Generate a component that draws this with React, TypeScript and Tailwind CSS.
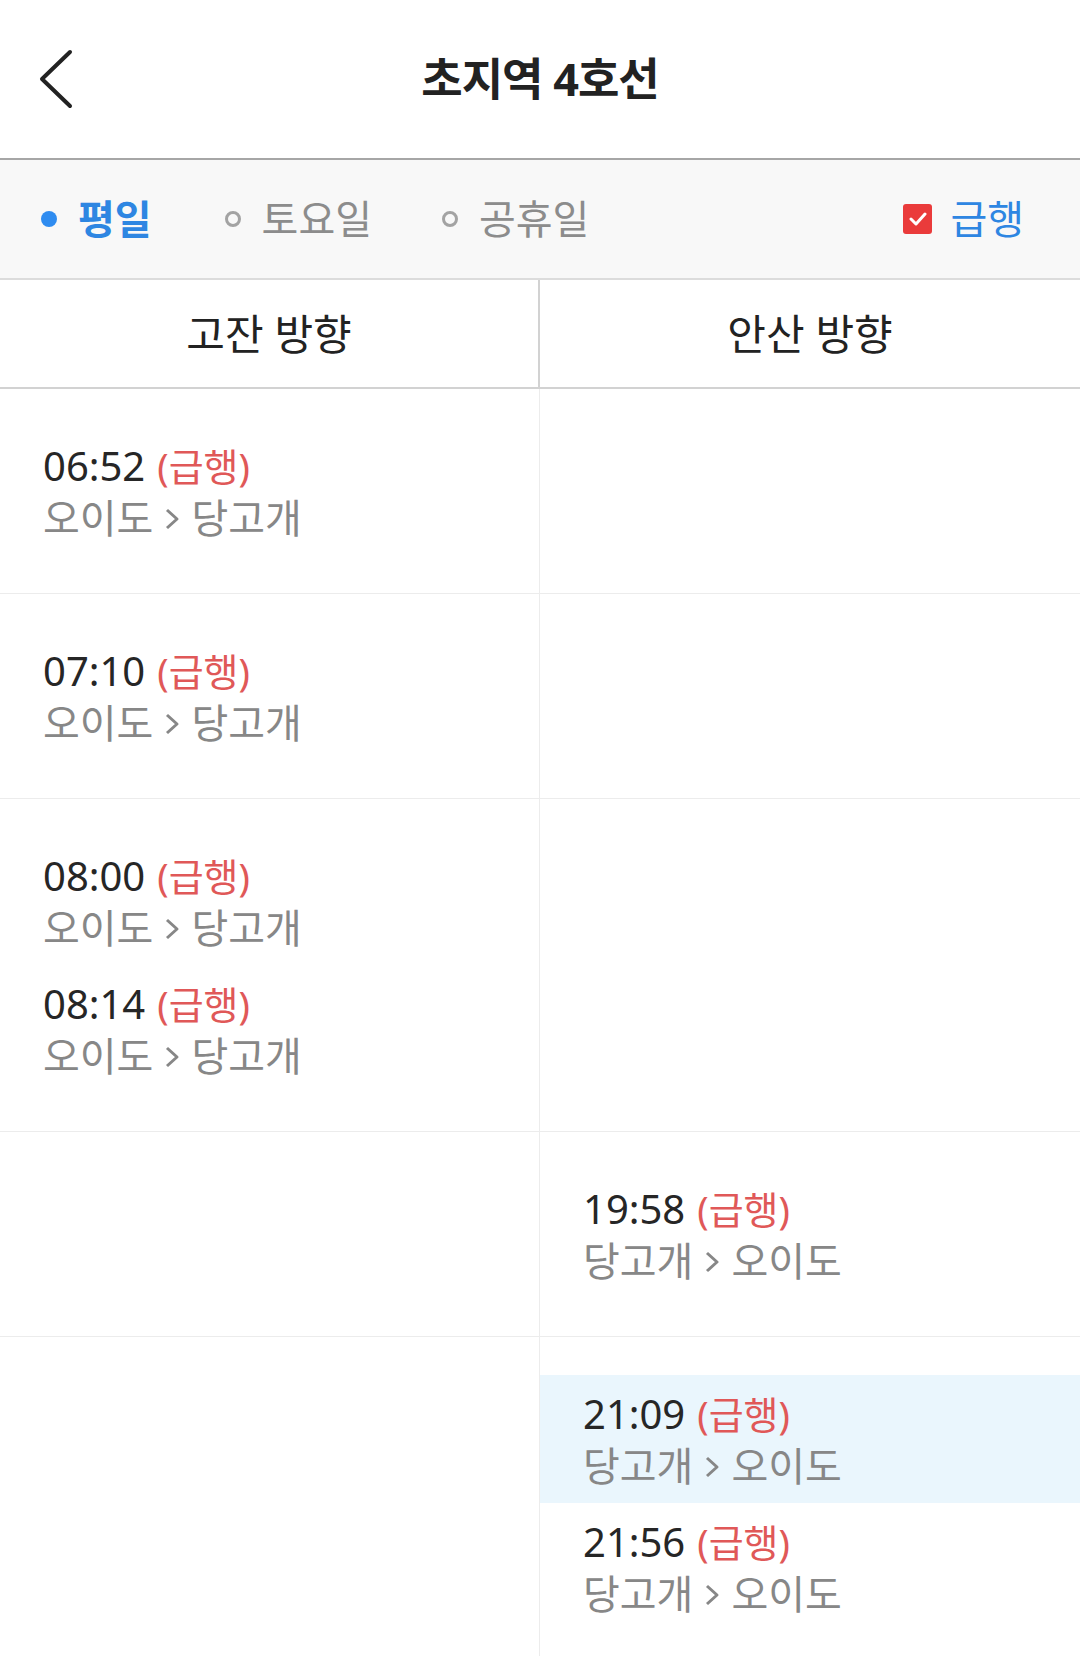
import React from "react";

type Train = { time: string; from: string; to: string; highlight?: boolean };
type Row = { left: Train[]; right: Train[] };

const FONT = '"Noto Sans", "Noto Sans CJK KR", sans-serif';

const rows: Row[] = [
  { left: [{ time: "06:52", from: "오이도", to: "당고개" }], right: [] },
  { left: [{ time: "07:10", from: "오이도", to: "당고개" }], right: [] },
  {
    left: [
      { time: "08:00", from: "오이도", to: "당고개" },
      { time: "08:14", from: "오이도", to: "당고개" },
    ],
    right: [],
  },
  { left: [], right: [{ time: "19:58", from: "당고개", to: "오이도" }] },
  {
    left: [],
    right: [
      { time: "21:09", from: "당고개", to: "오이도", highlight: true },
      { time: "21:56", from: "당고개", to: "오이도" },
    ],
  },
];

function Entry({ train }: { train: Train }) {
  return (
    <div
      className={
        "h-[128px] flex flex-col justify-center pl-[43px] " +
        (train.highlight ? "bg-[#eaf6fd]" : "")
      }
    >
      <div className="flex items-baseline leading-[51px]">
        <span className="text-[40px] text-[#262626]">{train.time}</span>
        <span className="ml-[12px] text-[38px] text-[#e05858]">(급행)</span>
      </div>
      <div className="flex items-center h-[51px] text-[40px] leading-[51px] text-[#878787]">
        <span>{train.from}</span>
        <svg className="mx-[11px] mt-[4px]" width="16" height="22" viewBox="0 0 16 22" fill="none">
          <polyline
            points="3,2 13,11 3,20"
            stroke="#878787"
            strokeWidth="3"
            strokeLinejoin="round"
          />
        </svg>
        <span>{train.to}</span>
      </div>
    </div>
  );
}

function Radio({
  label,
  active,
  className = "",
}: {
  label: string;
  active?: boolean;
  className?: string;
}) {
  return (
    <div className={"flex items-center gap-[21px] " + className}>
      {active ? (
        <span className="w-[16px] h-[16px] rounded-full bg-[#2f8cf0]" />
      ) : (
        <span className="w-[16px] h-[16px] rounded-full border-[3px] border-[#a3a3a3]" />
      )}
      <span
        className={
          "text-[40px] leading-none " +
          (active ? "text-[#2e86e2] font-semibold" : "text-[#8c8c8c]")
        }
      >
        {label}
      </span>
    </div>
  );
}

export default function App() {
  return (
    <div className="w-[1080px] min-h-[1656px] bg-white" style={{ fontFamily: FONT }}>
      <header className="h-[160px] grid grid-cols-[1fr_auto_1fr] items-center border-b-2 border-[#a6a6a6]">
        <div className="pl-[39px] flex items-center">
          <svg width="34" height="60" viewBox="0 0 34 60" fill="none">
            <polyline
              points="31,3 3,30 31,57"
              stroke="#222"
              strokeWidth="4"
              strokeLinecap="round"
              strokeLinejoin="round"
            />
          </svg>
        </div>
        <h1 className="text-[45px] font-bold text-[#222] tracking-[-1px]">초지역 4호선</h1>
        <div />
      </header>

      <div className="h-[120px] bg-[#f8f8f8] border-b-2 border-[#dcdcdc] flex items-center pl-[41px] pr-[56px]">
        <div className="flex items-center">
          <Radio label="평일" active />
          <Radio label="토요일" className="ml-[73px]" />
          <Radio label="공휴일" className="ml-[70px]" />
        </div>
        <div className="ml-auto flex items-center gap-[18px]">
          <span className="w-[29px] h-[30px] rounded-[3px] bg-[#ea3b3b] flex items-center justify-center">
            <svg width="18" height="14" viewBox="0 0 18 14" fill="none">
              <polyline
                points="2,7 7,12 16,2"
                stroke="#fff"
                strokeWidth="3"
                strokeLinecap="round"
                strokeLinejoin="round"
              />
            </svg>
          </span>
          <span className="text-[40px] leading-none text-[#2e86e2]">급행</span>
        </div>
      </div>

      <div className="h-[109px] grid grid-cols-2 border-b-2 border-[#d2d2d2]">
        <div className="flex items-center justify-center border-r-2 border-[#d2d2d2] text-[42px] text-[#222]">
          고잔 방향
        </div>
        <div className="flex items-center justify-center text-[42px] text-[#222]">
          안산 방향
        </div>
      </div>

      {rows.map((row, i) => (
        <div key={i} className="grid grid-cols-2 border-b border-[#ececec]">
          <div className="py-[38px] border-r border-[#ececec]">
            {row.left.map((t) => (
              <Entry key={t.time} train={t} />
            ))}
          </div>
          <div className="py-[38px]">
            {row.right.map((t) => (
              <Entry key={t.time} train={t} />
            ))}
          </div>
        </div>
      ))}
    </div>
  );
}
